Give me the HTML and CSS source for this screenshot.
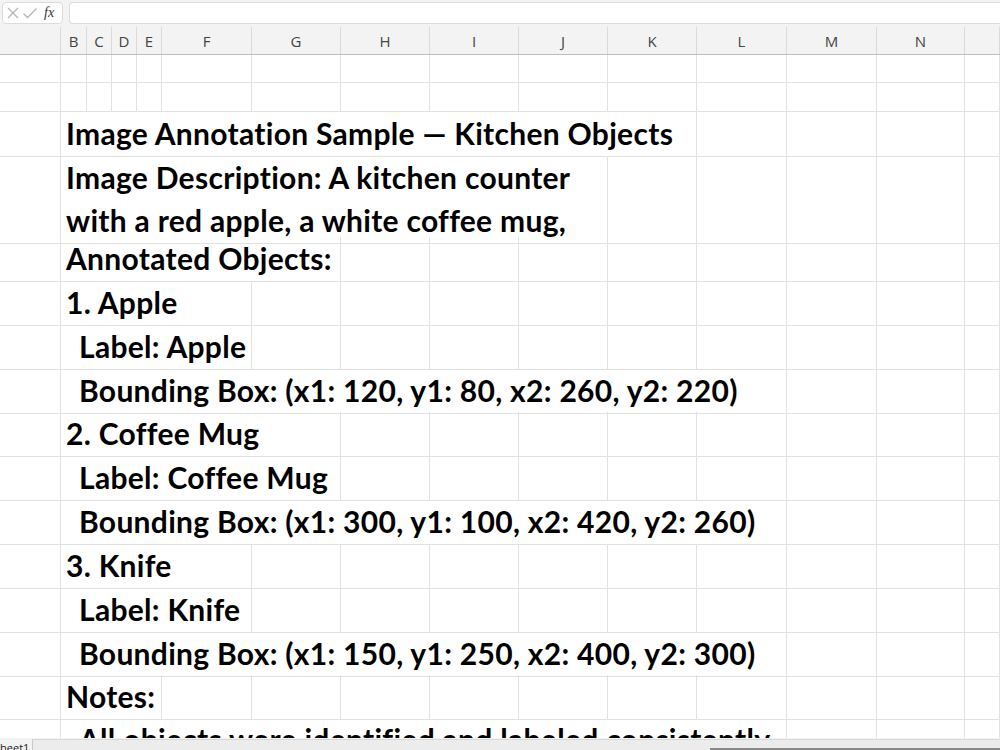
FILE: index.html
```html
<!DOCTYPE html>
<html lang="en">
<head>
<meta charset="utf-8">
<title>Image Annotation Sample</title>
<link rel="stylesheet" href="styles.css">
</head>
<body>
<div class="app">
  <div class="formula-bar">
    <div class="fx-box">
      <svg class="ico" width="14" height="14" viewBox="0 0 14 14"><path d="M2 2 L12 12 M12 2 L2 12" stroke="#b4b4b4" stroke-width="1.3" fill="none"/></svg>
      <svg class="ico" width="16" height="14" viewBox="0 0 16 14"><path d="M1.5 7.5 L5.5 11.5 L14.5 2.5" stroke="#b4b4b4" stroke-width="1.3" fill="none"/></svg>
      <span class="fx">fx</span>
    </div>
    <div class="input-box"></div>
  </div>

  <div class="sheet">
    <div class="row head">
      <i class="h"></i><i class="h">B</i><i class="h">C</i><i class="h">D</i><i class="h">E</i><i class="h">F</i><i class="h">G</i><i class="h">H</i><i class="h">I</i><i class="h">J</i><i class="h">K</i><i class="h">L</i><i class="h">M</i><i class="h">N</i><i class="h"></i>
    </div>

    <div class="row r28">
      <i class="c"></i><i class="c"></i><i class="c"></i><i class="c"></i><i class="c"></i><i class="c"></i><i class="c"></i><i class="c"></i><i class="c"></i><i class="c"></i><i class="c"></i><i class="c"></i><i class="c"></i><i class="c"></i><i class="c"></i>
    </div>
    <div class="row r29">
      <i class="c"></i><i class="c"></i><i class="c"></i><i class="c"></i><i class="c"></i><i class="c"></i><i class="c"></i><i class="c"></i><i class="c"></i><i class="c"></i><i class="c"></i><i class="c"></i><i class="c"></i><i class="c"></i><i class="c"></i>
    </div>

    <div class="row r44">
      <i class="c"></i><div class="c t to-k">Image Annotation Sample — Kitchen Objects</div><i class="c"></i><i class="c"></i><i class="c"></i><i class="c"></i>
    </div>
    <div class="row r81">
      <i class="c"></i><div class="c t wrap to-j"><span>Image Description: A kitchen counter</span><span>with a red apple, a white coffee mug,</span></div><i class="c"></i><i class="c"></i><i class="c"></i><i class="c"></i><i class="c"></i>
    </div>
    <div class="row r44">
      <i class="c"></i><div class="c t to-g">Annotated Objects:</div><i class="c"></i><i class="c"></i><i class="c"></i><i class="c"></i><i class="c"></i><i class="c"></i><i class="c"></i><i class="c"></i>
    </div>
    <div class="row r44">
      <i class="c"></i><div class="c t to-f">1. Apple</div><i class="c"></i><i class="c"></i><i class="c"></i><i class="c"></i><i class="c"></i><i class="c"></i><i class="c"></i><i class="c"></i><i class="c"></i>
    </div>
    <div class="row r44">
      <i class="c"></i><div class="c t indent to-f">Label: Apple</div><i class="c"></i><i class="c"></i><i class="c"></i><i class="c"></i><i class="c"></i><i class="c"></i><i class="c"></i><i class="c"></i><i class="c"></i>
    </div>
    <div class="row r43">
      <i class="c"></i><div class="c t indent to-l">Bounding Box: (x1: 120, y1: 80, x2: 260, y2: 220)</div><i class="c"></i><i class="c"></i><i class="c"></i>
    </div>
    <div class="row r44">
      <i class="c"></i><div class="c t to-g">2. Coffee Mug</div><i class="c"></i><i class="c"></i><i class="c"></i><i class="c"></i><i class="c"></i><i class="c"></i><i class="c"></i><i class="c"></i>
    </div>
    <div class="row r44">
      <i class="c"></i><div class="c t indent to-g">Label: Coffee Mug</div><i class="c"></i><i class="c"></i><i class="c"></i><i class="c"></i><i class="c"></i><i class="c"></i><i class="c"></i><i class="c"></i>
    </div>
    <div class="row r44">
      <i class="c"></i><div class="c t indent to-l">Bounding Box: (x1: 300, y1: 100, x2: 420, y2: 260)</div><i class="c"></i><i class="c"></i><i class="c"></i>
    </div>
    <div class="row r44">
      <i class="c"></i><div class="c t to-f">3. Knife</div><i class="c"></i><i class="c"></i><i class="c"></i><i class="c"></i><i class="c"></i><i class="c"></i><i class="c"></i><i class="c"></i><i class="c"></i>
    </div>
    <div class="row r44">
      <i class="c"></i><div class="c t indent to-f">Label: Knife</div><i class="c"></i><i class="c"></i><i class="c"></i><i class="c"></i><i class="c"></i><i class="c"></i><i class="c"></i><i class="c"></i><i class="c"></i>
    </div>
    <div class="row r43">
      <i class="c"></i><div class="c t indent to-l">Bounding Box: (x1: 150, y1: 250, x2: 400, y2: 300)</div><i class="c"></i><i class="c"></i><i class="c"></i>
    </div>
    <div class="row r43">
      <i class="c"></i><div class="c t to-e">Notes:</div><i class="c"></i><i class="c"></i><i class="c"></i><i class="c"></i><i class="c"></i><i class="c"></i><i class="c"></i><i class="c"></i><i class="c"></i><i class="c"></i>
    </div>
    <div class="row r44">
      <i class="c"></i><div class="c t indent to-l">All objects were identified and labeled consistently.</div><i class="c"></i><i class="c"></i><i class="c"></i>
    </div>
  </div>

  <div class="status">
    <span class="tab">Sheet1</span>
    <div class="scroll-area"><div class="thumb"></div></div>
  </div>
</div>
</body>
</html>
```

FILE: styles.css
```css
* { box-sizing: border-box; }

html, body {
  margin: 0;
  padding: 0;
  background: #ffffff;
}

.app {
  width: 1000px;
  height: 750px;
  display: flex;
  flex-direction: column;
  overflow: hidden;
  font-family: "Open Sans", "Noto Sans", sans-serif;
}

/* formula bar */
.formula-bar {
  height: 27px;
  flex: none;
  display: flex;
  align-items: flex-start;
  gap: 6px;
  padding: 2px 0 0 2px;
  background: #f3f3f3;
}

.fx-box {
  width: 61px;
  height: 22px;
  display: flex;
  align-items: center;
  gap: 2px;
  padding-left: 3px;
  background: #ffffff;
  border: 1px solid #dcdcdc;
  border-radius: 4px;
}

.ico { flex: none; }

.fx {
  margin-left: 4px;
  font-family: "Liberation Serif", serif;
  font-style: italic;
  font-size: 14px;
  color: #333333;
}

.input-box {
  flex: 1;
  height: 22px;
  background: #ffffff;
  border: 1px solid #dcdcdc;
  border-right: none;
  border-radius: 4px 0 0 4px;
}

/* grid */
.sheet {
  flex: 1;
  overflow: hidden;
}

.row {
  display: grid;
  grid-template-columns: 61px 26px 25px 25px 25px 90px 89px 89px 89px 89px 89px 90px 90px 88px 35px;
}

.head {
  height: 28px;
  background: #f3f3f3;
  border-bottom: 1px solid #bdbdbd;
}

.h {
  font-style: normal;
  display: flex;
  align-items: center;
  justify-content: center;
  font-size: 15px;
  color: #444444;
  border-right: 1px solid #dadada;
  padding-top: 1px;
}

.r28 { height: 28px; }
.r29 { height: 29px; }
.r43 { height: 43px; }
.r44 { height: 44px; }
.r81 { height: 81px; }

.c {
  border-right: 1px solid #e1e1e1;
  border-bottom: 1px solid #e1e1e1;
}

/* text cells spill over the empty cells to their right */
.t {
  display: flex;
  flex-direction: column;
  justify-content: flex-end;
  padding: 0 0 2px 5px;
  white-space: nowrap;
  font-family: "Lato", "Liberation Sans", sans-serif;
  font-weight: 700;
  font-size: 30px;
  letter-spacing: 0.3px;
  line-height: 42px;
  color: #000000;
}

.wrap span { display: block; }
.wrap span:first-child { margin-bottom: 1px; }

.indent { padding-left: 18px; }

.to-e { grid-column: 2 / 6; }
.to-f { grid-column: 2 / 7; }
.to-g { grid-column: 2 / 8; }
.to-j { grid-column: 2 / 11; }
.to-k { grid-column: 2 / 12; }
.to-l { grid-column: 2 / 13; }

/* bottom sheet tabs strip */
.status {
  height: 12px;
  flex: none;
  display: flex;
  align-items: flex-start;
  background: #f3f3f3;
  overflow: hidden;
}

.tab {
  width: 38px;
  margin-left: -6px;
  font-size: 11px;
  line-height: 14px;
  color: #222222;
  padding-top: 3px;
}

.scroll-area {
  flex: 1;
  height: 12px;
  margin-top: 1px;
  background: #ececec;
  border-left: 1px solid #c8c8c8;
  border-top: 1px solid #d8d8d8;
  display: flex;
  justify-content: flex-end;
  align-items: flex-end;
}

.thumb {
  width: 290px;
  height: 3px;
  border-top: 2px solid #8a8a8a;
}
```
